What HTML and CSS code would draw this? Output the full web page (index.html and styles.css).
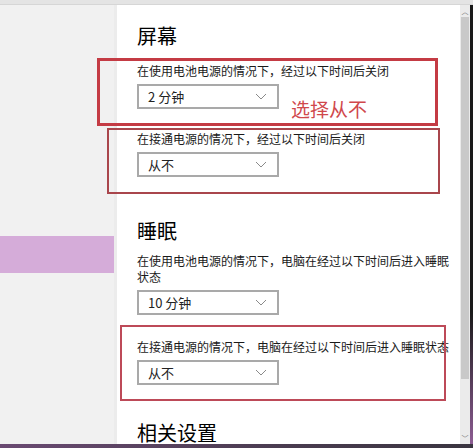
FILE: index.html
```html
<!DOCTYPE html>
<html lang="zh-CN">
<head>
    <meta charset="UTF-8">
    <meta name="viewport" content="width=device-width, initial-scale=1.0">
    <title>电源和睡眠</title>
    <link rel="stylesheet" href="styles.css">
</head>
<body>
    <div class="topbar"></div>
    <div class="window">
        <aside class="nav">
            <div class="nav-active"></div>
        </aside>

        <main class="content">
            <h2 class="title title-first">屏幕</h2>

            <div class="setting">
                <p class="label">在使用电池电源的情况下，经过以下时间后关闭</p>
                <div class="select">
                    <span>2 分钟</span>
                    <svg class="chevron" width="12" height="7" viewBox="0 0 12 7"><polyline points="1,1 6,6 11,1" /></svg>
                </div>
            </div>

            <div class="setting">
                <p class="label">在接通电源的情况下，经过以下时间后关闭</p>
                <div class="select">
                    <span>从不</span>
                    <svg class="chevron" width="12" height="7" viewBox="0 0 12 7"><polyline points="1,1 6,6 11,1" /></svg>
                </div>
            </div>

            <h2 class="title title-sleep">睡眠</h2>

            <div class="setting setting-sleep">
                <p class="label">在使用电池电源的情况下，电脑在经过以下时间后进入睡眠状态</p>
                <div class="select">
                    <span>10 分钟</span>
                    <svg class="chevron" width="12" height="7" viewBox="0 0 12 7"><polyline points="1,1 6,6 11,1" /></svg>
                </div>
            </div>

            <div class="setting setting-plugged">
                <p class="label nowrap">在接通电源的情况下，电脑在经过以下时间后进入睡眠状态</p>
                <div class="select">
                    <span>从不</span>
                    <svg class="chevron" width="12" height="7" viewBox="0 0 12 7"><polyline points="1,1 6,6 11,1" /></svg>
                </div>
            </div>

            <h2 class="title title-last">相关设置</h2>
        </main>

        <div class="scrollbar">
            <div class="scroll-track">
                <span class="arrow">︿</span>
                <div class="thumb"></div>
                <span class="arrow">﹀</span>
            </div>
            <div class="edge"></div>
        </div>

        <!-- annotations drawn over the screenshot -->
        <div class="mark mark-1"></div>
        <div class="mark mark-2"></div>
        <div class="mark mark-3"></div>
        <div class="note">选择从不</div>
    </div>
    <div class="taskbar"></div>
</body>
</html>
```

FILE: styles.css
```css
* {
    box-sizing: border-box;
}

body {
    margin: 0;
    width: 473px;
    height: 448px;
    overflow: hidden;
    background-color: #fff;
    font-family: "Noto Sans CJK SC", "Liberation Sans", sans-serif;
    color: #1a1a1a;
}

.topbar {
    height: 5px;
    background-color: #e4e4e4;
    border-bottom: 1px solid #d6d6d6;
}

.window {
    position: relative;
    display: flex;
    height: 439px;
}

.nav {
    width: 117px;
    flex-shrink: 0;
    background-color: #f1f1f1;
    border-right: 3px solid #ececec;
}

.nav-active {
    margin-top: 231px;
    height: 37px;
    background-color: #d5acd9;
}

.content {
    flex: 1;
    padding: 0 0 0 20px;
}

.title {
    margin: 30px 0 0;
    font-size: 20px;
    font-weight: normal;
    line-height: 28px;
    color: #000;
}

.title-first {
    margin-top: 17px;
}

.title-sleep {
    margin-top: 40px;
}

.title-last {
    margin-top: 38px;
    line-height: 20px;
}

.setting {
    width: 314px;
    margin-top: 13px;
}

.setting + .setting {
    margin-top: 22px;
}

.setting-sleep {
    margin-top: 8px;
}

.setting + .setting-plugged {
    margin-top: 24px;
}

.label {
    margin: 0 0 5px;
    font-size: 12px;
    line-height: 16px;
    color: #1a1a1a;
}

.nowrap {
    white-space: nowrap;
}

.select {
    display: flex;
    align-items: center;
    justify-content: space-between;
    width: 142px;
    height: 25px;
    padding: 0 10px 0 9px;
    border: 2px solid #a9a9a9;
    font-size: 13px;
    color: #222;
}

.chevron polyline {
    fill: none;
    stroke: #8a8a8a;
    stroke-width: 1;
}

.scrollbar {
    display: flex;
    width: 13px;
    flex-shrink: 0;
}

.scroll-track {
    display: flex;
    flex-direction: column;
    align-items: center;
    width: 10px;
    background-color: #ebebeb;
}

.arrow {
    font-size: 7px;
    line-height: 12px;
    color: #777;
}

.thumb {
    width: 8px;
    height: 362px;
    margin-bottom: auto;
    background-color: #c9c9c9;
}

.edge {
    width: 3px;
    background: linear-gradient(#1a1a1a 70%, #8d5c93);
}

.taskbar {
    height: 4px;
    background: linear-gradient(90deg, #6a4a72, #4a3c50 60%, #3a3540);
}

.mark {
    position: absolute;
    border: 2px solid #c43b44;
}

.mark-1 {
    left: 97px;
    top: 53px;
    width: 341px;
    height: 68px;
    border-width: 3px;
}

.mark-2 {
    left: 107px;
    top: 123px;
    width: 333px;
    height: 66px;
    border-color: #a9464c;
}

.mark-3 {
    left: 120px;
    top: 320px;
    width: 326px;
    height: 76px;
    border-color: #bd4a58;
}

.note {
    position: absolute;
    left: 291px;
    top: 91px;
    font-size: 19px;
    line-height: 26px;
    color: #d0484c;
}
```
